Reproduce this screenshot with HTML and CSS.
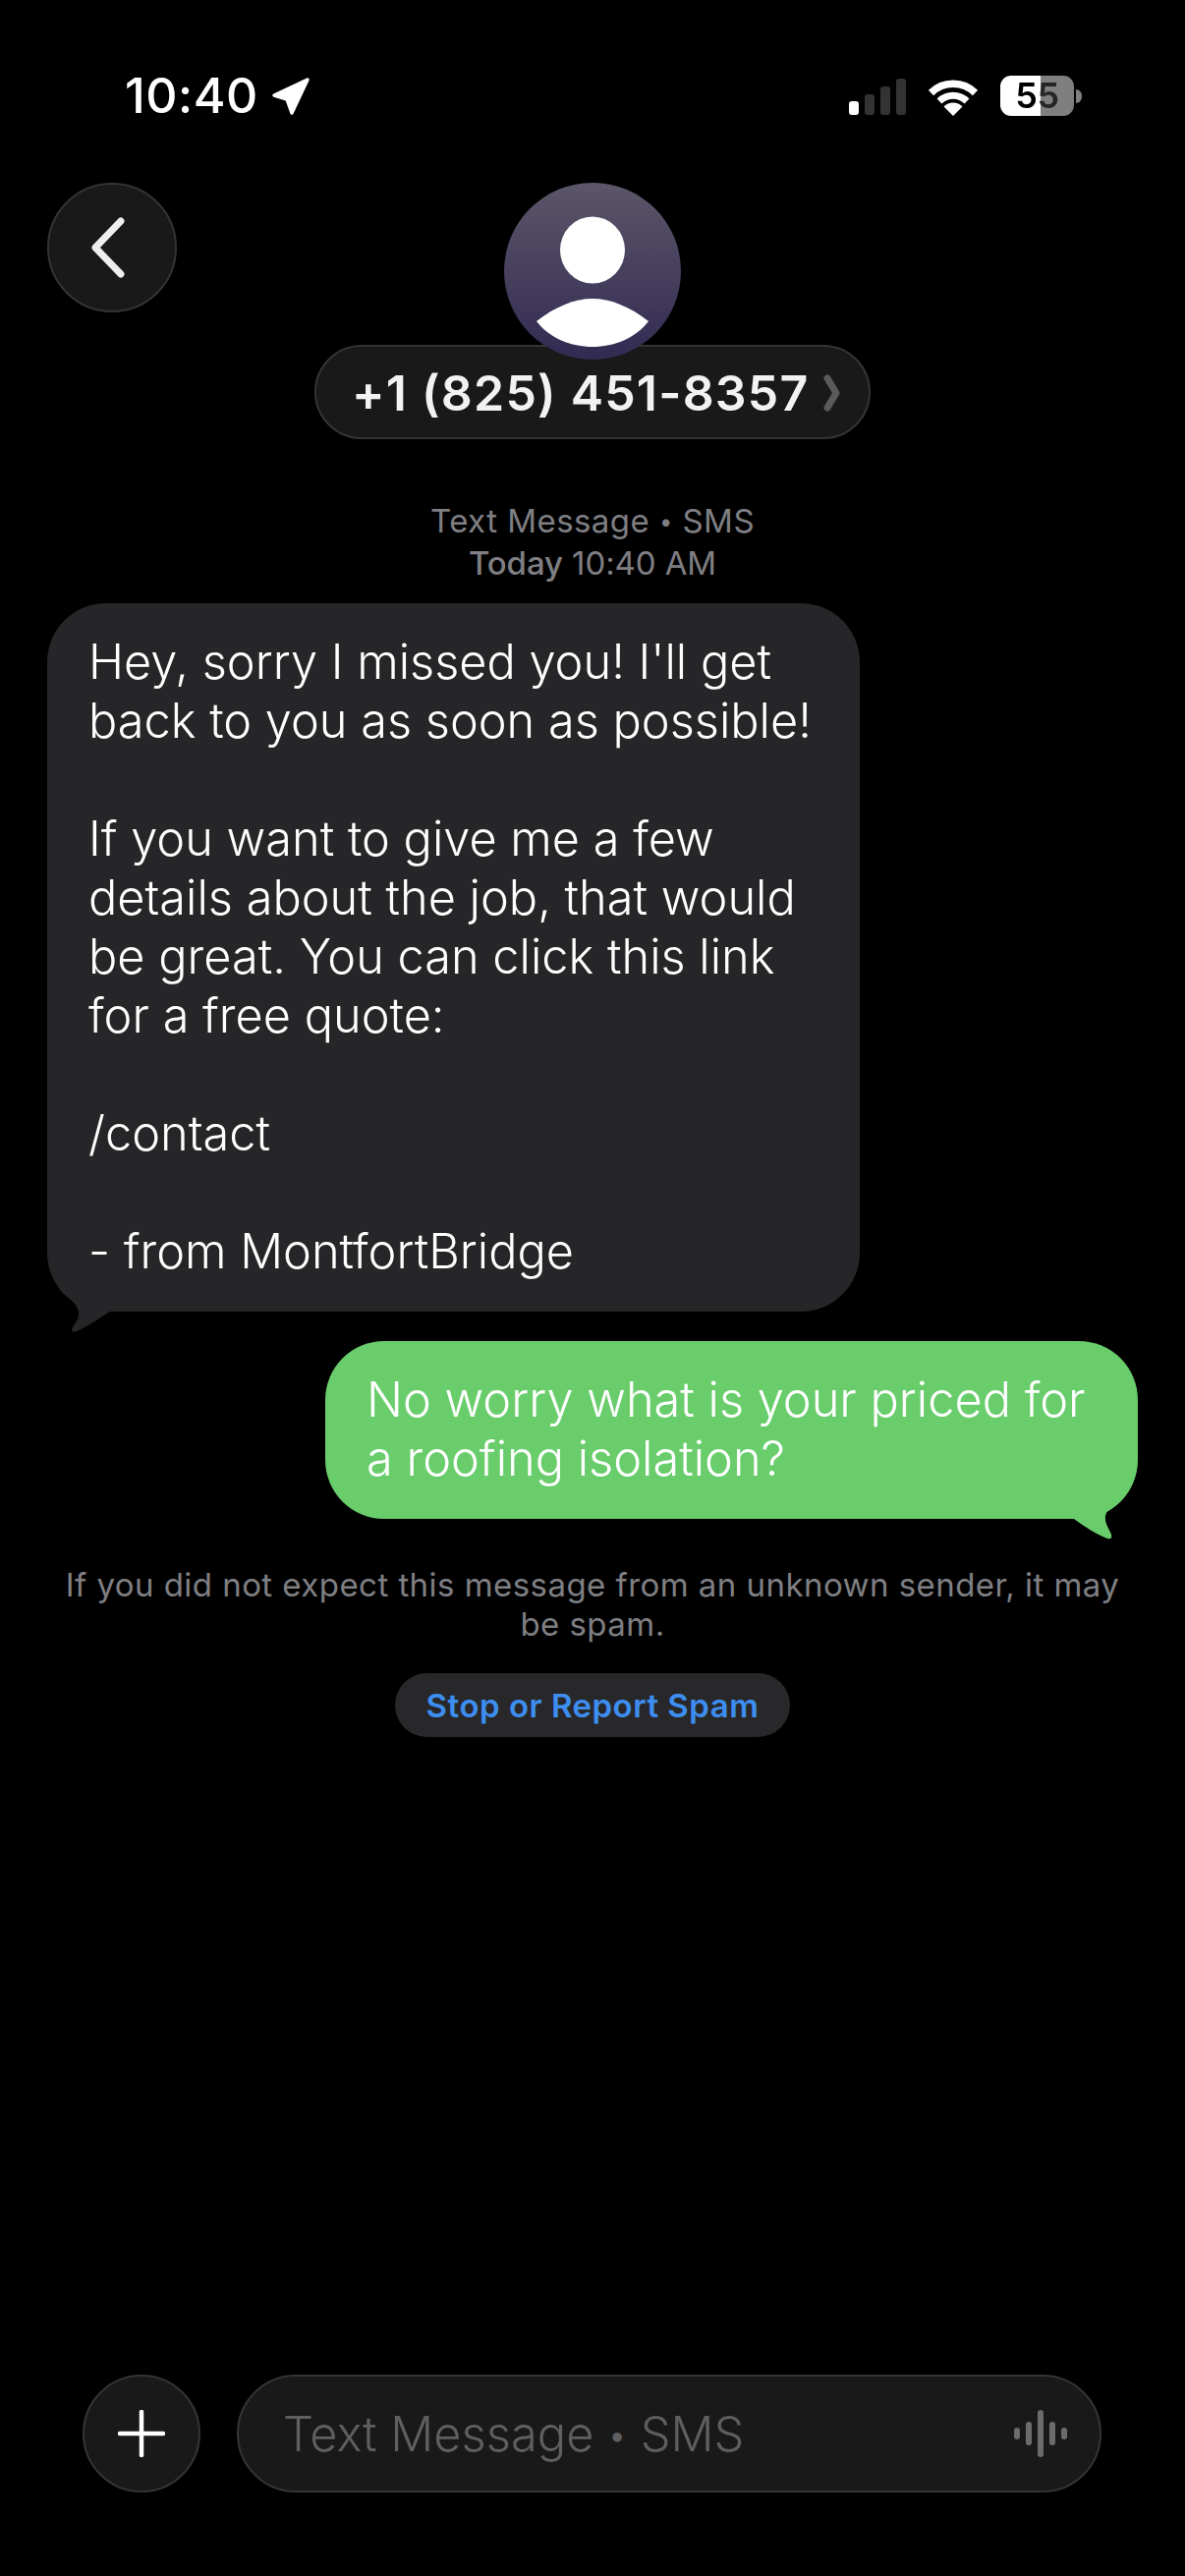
FILE: index.html
```html
<!DOCTYPE html>
<html lang="en">
<head>
<meta charset="utf-8">
<title>Messages</title>
<link rel="stylesheet" href="styles.css">
</head>
<body>
<div class="screen">
  <div class="status">
    <div class="status-left">
      <span class="time">10:40</span>
      <svg class="loc" width="40" height="40" viewBox="0 0 40 40"><path d="M37 3 L3 19 L16 23 L21 37 Z" fill="#fff" stroke="#fff" stroke-width="3.5" stroke-linejoin="round"/></svg>
    </div>
    <div class="status-right">
      <svg class="signal" width="58" height="37" viewBox="0 0 58 37"><rect x="0" y="23" width="10" height="14" rx="3" fill="#fff"/><rect x="16" y="16" width="10" height="21" rx="3" fill="#333"/><rect x="32" y="8" width="10" height="29" rx="3" fill="#333"/><rect x="48" y="0" width="10" height="37" rx="3" fill="#333"/></svg>
      <svg class="wifi" width="52" height="38" viewBox="0 0 52 38"><path d="M3.5 14.5 A32 32 0 0 1 48.5 14.5" fill="none" stroke="#fff" stroke-width="7.5"/><path d="M12 23 A20 20 0 0 1 40 23" fill="none" stroke="#fff" stroke-width="7"/><path d="M26 38 L16.5 28.5 A13.5 13.5 0 0 1 35.5 28.5 Z" fill="#fff"/></svg>
      <div class="battery"><span class="battery-num">55</span></div>
      <span class="battery-nub"></span>
    </div>
  </div>

  <header class="header">
    <button class="round back" aria-label="Back">
      <svg width="40" height="64" viewBox="0 0 40 64"><path d="M33 5 L7 32 L33 59" fill="none" stroke="#eee" stroke-width="7" stroke-linecap="round" stroke-linejoin="round"/></svg>
    </button>
    <div class="contact">
      <div class="avatar">
        <svg width="180" height="180" viewBox="0 0 180 180"><ellipse cx="90" cy="68.500" rx="33" ry="34" fill="#fff"/><path d="M33 141 C52 126 72 118 90 118 C108 118 128 126 147 141 C134 158 112 167 90 167 C68 167 46 158 33 141 Z" fill="#fff"/></svg>
      </div>
      <div class="name-pill">
        <span class="number">+1 (825) 451-8357</span>
        <svg class="pill-chev" width="18" height="38" viewBox="0 0 18 38"><path d="M4 4 L13 19 L4 34" fill="none" stroke="#5a5a5a" stroke-width="7" stroke-linecap="round" stroke-linejoin="round"/></svg>
      </div>
    </div>
  </header>

  <main class="thread">
    <p class="meta">Text Message <span class="dot">•</span> SMS<br><span class="meta-time"><span class="meta-day">Today</span> 10:40 AM</span></p>

    <div class="bubble incoming">Hey, sorry I missed you! I'll get<br>back to you as soon as possible!<br><br>If you want to give me a few<br>details about the job, that would<br>be great. You can click this link<br>for a free quote:<br><br>/contact<br><br>- from MontfortBridge
      <svg class="tail tail-in" width="70" height="90" viewBox="48 1267 70 90"><path d="M48 1267 C50 1290 54 1304 63 1315 C70 1322 78 1326 80 1335 C81 1343 76 1347 73.500 1352 C72 1356 75 1356 78 1355 C87 1351 95 1346 104 1340 L112 1335 L118 1267 Z" fill="#262628"/></svg>
    </div>

    <div class="bubble outgoing">No worry what is your priced for<br>a roofing isolation?
      <svg class="tail tail-out" width="70" height="100" viewBox="1090 1468 70 100"><path d="M1158 1468 C1157 1490 1156 1510 1145 1523 C1138 1531 1129 1534 1127 1543 C1126 1551 1131 1556 1133 1562 C1134 1566 1132 1567 1129 1566 C1118 1562 1106 1554 1095 1546 L1090 1468 Z" fill="#69cd6c"/></svg>
    </div>

    <p class="notice">If you did not expect this message from an unknown sender, it may<br>be spam.</p>
    <button class="spam">Stop or Report Spam</button>
  </main>

  <footer class="composer">
    <button class="round plus" aria-label="Add">
      <svg width="48" height="48" viewBox="0 0 48 48"><path d="M24 2 V46 M2 24 H46" stroke="#fff" stroke-width="4.500" stroke-linecap="round"/></svg>
    </button>
    <div class="input">
      <span class="placeholder">Text Message <span class="dot">•</span> SMS</span>
      <svg class="wave" width="54" height="48" viewBox="0 0 54 48"><g fill="#6b6b6b"><rect x="0" y="18" width="6" height="12" rx="3"/><rect x="12" y="12" width="6" height="24" rx="3"/><rect x="24" y="0" width="6" height="48" rx="3"/><rect x="36" y="12" width="6" height="24" rx="3"/><rect x="48" y="18" width="6" height="12" rx="3"/></g></svg>
    </div>
  </footer>
</div>
</body>
</html>
```

FILE: styles.css
```css
* { box-sizing: border-box; }

html, body {
  margin: 0;
  background: #000;
}

.screen {
  width: 1206px;
  height: 2622px;
  display: flex;
  flex-direction: column;
  background: #000;
  color: #fff;
  font-family: Inter, "Liberation Sans", sans-serif;
  overflow: hidden;
}

button {
  font-family: inherit;
  padding: 0;
  margin: 0;
}

.dot {
  font-size: 0.72em;
  vertical-align: 0.12em;
}

/* status bar */
.status {
  height: 186px;
  padding: 77px 105px 0 127px;
  display: flex;
  justify-content: space-between;
  align-items: flex-start;
  flex: none;
}

.status-left {
  display: flex;
  align-items: center;
  gap: 13px;
}

.time {
  font-size: 50px;
  line-height: 41px;
  font-weight: 500;
  letter-spacing: 0.5px;
}

.status-right {
  display: flex;
  align-items: center;
  height: 41px;
}

.signal { margin-right: 22px; margin-top: 2px; }
.wifi { margin-right: 22px; margin-top: 2px; }

.battery {
  width: 75px;
  height: 41px;
  border-radius: 11px;
  background: linear-gradient(90deg, #fff 0, #fff 41px, #7f7f7f 41px, #7f7f7f 100%);
  display: flex;
  align-items: center;
  justify-content: center;
}

.battery-num {
  font-size: 36px;
  line-height: 41px;
  font-weight: 600;
  letter-spacing: -0.5px;
  color: transparent;
  background: linear-gradient(90deg, #000 0, #000 25px, #262626 25px, #262626 100%);
  -webkit-background-clip: text;
  background-clip: text;
}

.battery-nub {
  width: 6px;
  height: 14px;
  margin-left: 2px;
  background: #7f7f7f;
  border-radius: 0 7px 7px 0;
}

/* header */
.header {
  flex: none;
  height: 261px;
  display: grid;
  grid-template-columns: 1fr auto 1fr;
  align-items: start;
  padding: 0 0 0 48px;
}

.round {
  display: flex;
  align-items: center;
  justify-content: center;
  border-radius: 50%;
  background: #191919;
  border: 2px solid #343434;
}

.back {
  width: 132px;
  height: 132px;
  grid-column: 1;
  padding-right: 8px;
}

.contact {
  grid-column: 2;
  display: flex;
  flex-direction: column;
  align-items: center;
  transform: translateX(-24px);
}

.avatar {
  width: 180px;
  height: 180px;
  border-radius: 50%;
  background: linear-gradient(180deg, #5c5669 0%, #322a52 100%);
  margin-bottom: -15px;
  position: relative;
  z-index: 1;
  display: flex;
}

.name-pill {
  width: 566px;
  height: 96px;
  border-radius: 48px;
  background: #191919;
  border: 2px solid #343434;
  display: flex;
  align-items: center;
  padding: 2px 0 0 36px;
  gap: 14px;
}

.number {
  font-size: 50px;
  line-height: 1;
  font-weight: 600;
  letter-spacing: 1.2px;
  color: #f2f2f2;
  white-space: nowrap;
}

/* thread */
.thread {
  flex: 1;
  display: flex;
  flex-direction: column;
  align-items: flex-start;
  padding: 62px 48px 0;
}

.meta {
  width: 100%;
  margin: 0 0 19px;
  text-align: center;
  font-size: 33px;
  line-height: 43px;
  letter-spacing: 0.45px;
  color: #7f7f83;
}

.meta-time { letter-spacing: -0.1px; }
.meta-day { font-weight: 500; }

.bubble {
  position: relative;
  isolation: isolate;
  width: 827px;
  border-radius: 60px;
  padding: 30px 0 31px 42px;
  font-size: 48.7px;
  line-height: 60px;
  font-weight: 300;
  white-space: nowrap;
}

.incoming { background: #262628; }

.outgoing {
  margin-top: 30px;
  align-self: flex-end;
  background: #69cd6c;
}

.tail {
  position: absolute;
  z-index: -1;
}
.tail-in { left: 0; bottom: -22px; }
.tail-out { right: 0; bottom: -22px; }

.notice {
  width: 100%;
  margin: 47px 0 0;
  text-align: center;
  font-size: 33px;
  line-height: 40px;
  letter-spacing: 0.45px;
  color: #7f7f83;
}

.spam {
  align-self: center;
  margin-top: 30px;
  width: 402px;
  height: 65px;
  border: 0;
  border-radius: 33px;
  background: #28282a;
  color: #3d8ef0;
  font-size: 33px;
  font-weight: 600;
  letter-spacing: 0.5px;
}

/* composer */
.composer {
  flex: none;
  display: flex;
  align-items: center;
  gap: 37px;
  padding: 0 85px 85px 84px;
}

.plus {
  width: 120px;
  height: 120px;
  flex: none;
}

.input {
  flex: 1;
  height: 120px;
  border-radius: 60px;
  background: #191919;
  border: 2px solid #343434;
  display: flex;
  align-items: center;
  justify-content: space-between;
  padding: 0 33px 0 45px;
}

.placeholder {
  font-size: 48.8px;
  font-weight: 300;
  color: #5f5f5f;
}
```
